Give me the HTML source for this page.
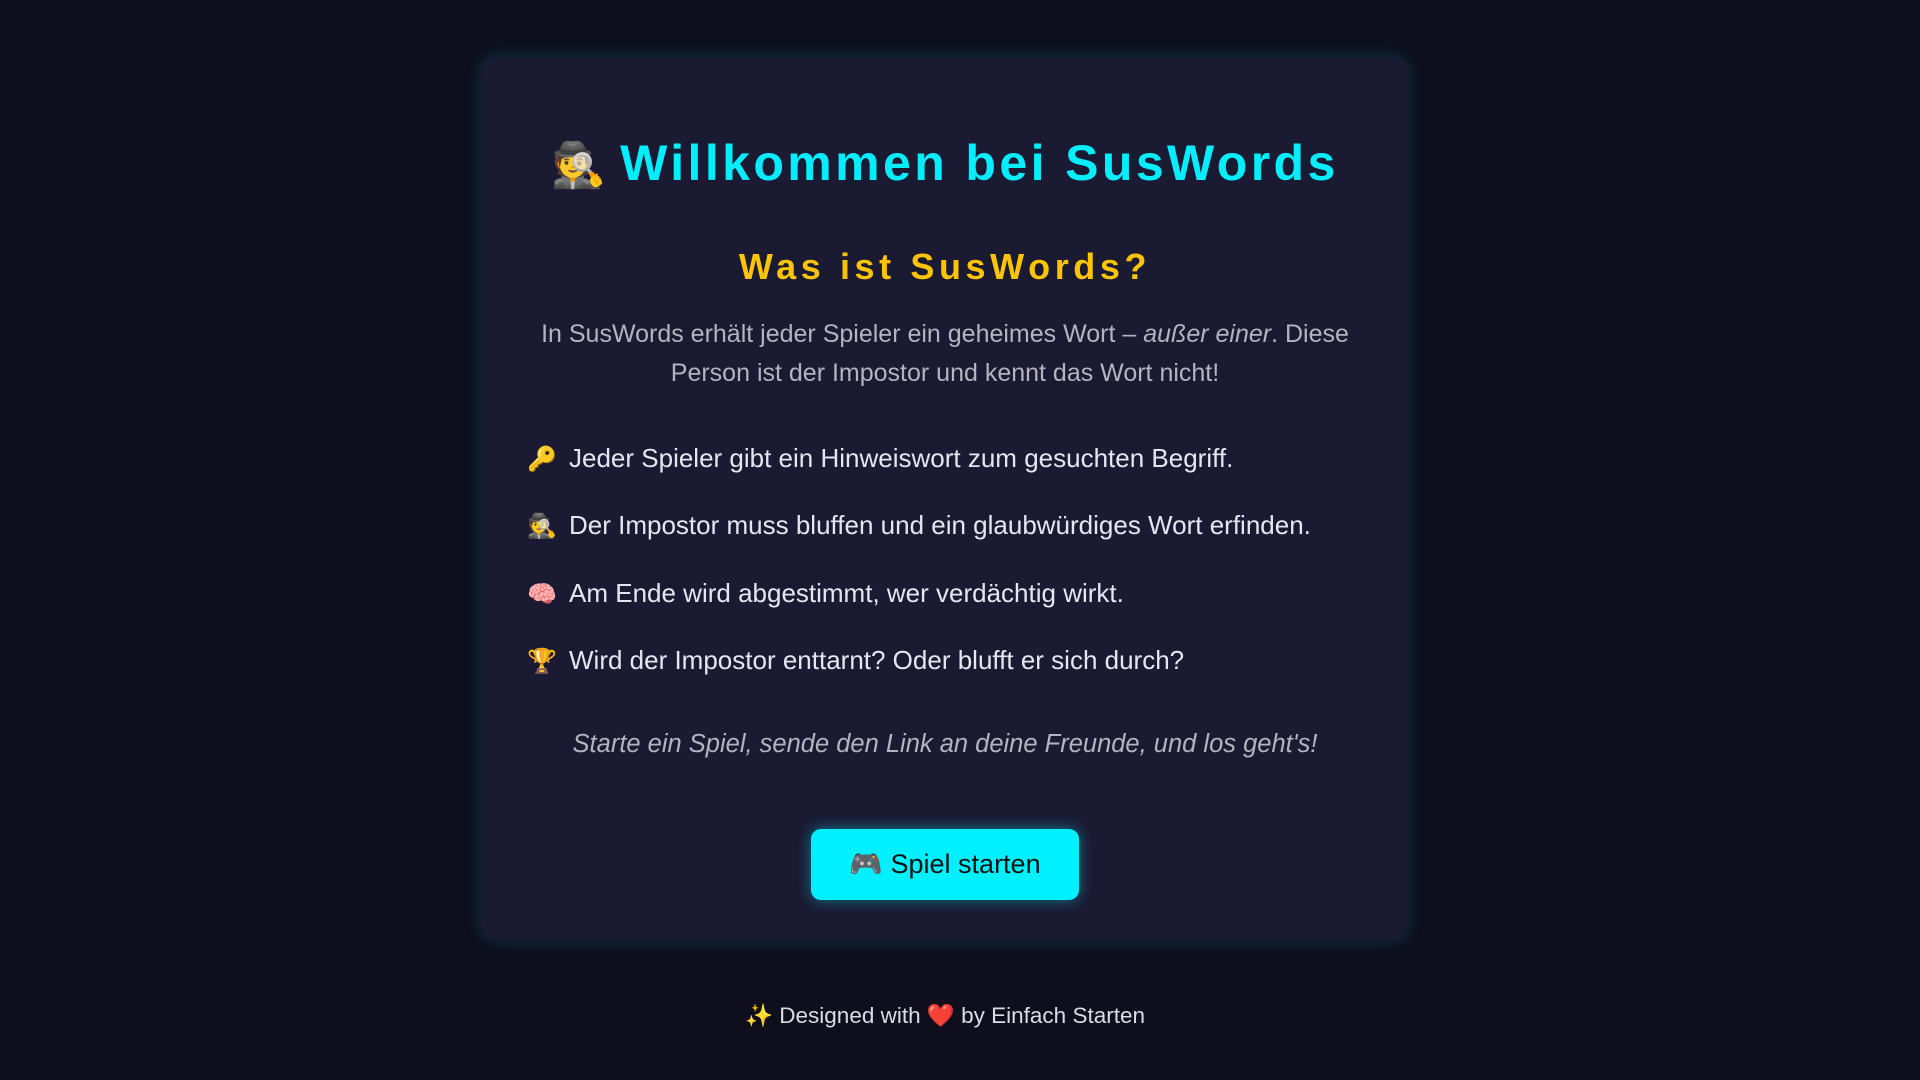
<!DOCTYPE html>
<html><head><meta charset="utf-8"><style>
html,body{margin:0;padding:0;width:1920px;height:1080px;background:#0e0e1d;overflow:hidden;font-family:"Liberation Sans","DejaVu Sans",sans-serif}
.card{position:absolute;left:481px;top:57px;width:927px;height:883px;background:#1b1a33;border-radius:16px;box-shadow:0 0 18px rgba(0,240,255,0.18)}
.t{position:absolute;left:0;width:1890px;text-align:center;white-space:nowrap}
h1{margin:0;position:absolute;top:131px;left:0;width:1890px;text-align:center;font-size:50px;font-weight:bold;color:#00eeff;letter-spacing:3.4px;line-height:64px;white-space:nowrap}
h1 span{letter-spacing:0;font-size:44px;margin-right:14px}
h2{margin:0;position:absolute;top:245px;left:0;width:1890px;text-align:center;font-size:36px;font-weight:bold;color:#ffc400;letter-spacing:4.6px;line-height:44px}
.p{top:315px;font-size:25px;color:#b4b3bf;line-height:39px}
.li{position:absolute;left:527px;font-size:26px;color:#e6e6f0;line-height:30px;white-space:nowrap}
.li span{display:inline-block;width:42px;font-size:24px}
.btn{position:absolute;left:811px;top:829px;width:268px;height:71px;background:#00f0ff;border-radius:10px;box-shadow:0 0 14px rgba(0,240,255,.45);color:#111;font-size:27px;line-height:71px;text-align:center}
</style></head><body>
<div class="card"></div>
<h1><span>🕵️</span>Willkommen bei SusWords</h1>
<h2>Was ist SusWords?</h2>
<div class="t p">In SusWords erhält jeder Spieler ein geheimes Wort – <i>außer einer</i>. Diese<br>Person ist der Impostor und kennt das Wort nicht!</div>
<div class="li" style="top:443px"><span>🔑</span>Jeder Spieler gibt ein Hinweiswort zum gesuchten Begriff.</div>
<div class="li" style="top:510px"><span>🕵️</span>Der Impostor muss bluffen und ein glaubwürdiges Wort erfinden.</div>
<div class="li" style="top:578px"><span>🧠</span>Am Ende wird abgestimmt, wer verdächtig wirkt.</div>
<div class="li" style="top:645px"><span>🏆</span>Wird der Impostor enttarnt? Oder blufft er sich durch?</div>
<div class="t" style="top:729px;font-size:25.5px;color:#b4b3bf;font-style:italic;line-height:30px">Starte ein Spiel, sende den Link an deine Freunde, und los geht's!</div>
<div class="btn">🎮 Spiel starten</div>
<div class="t" style="top:1002px;font-size:22.5px;color:#dcdce4;line-height:28px">✨ Designed with ❤️ by Einfach Starten</div>
</body></html>
